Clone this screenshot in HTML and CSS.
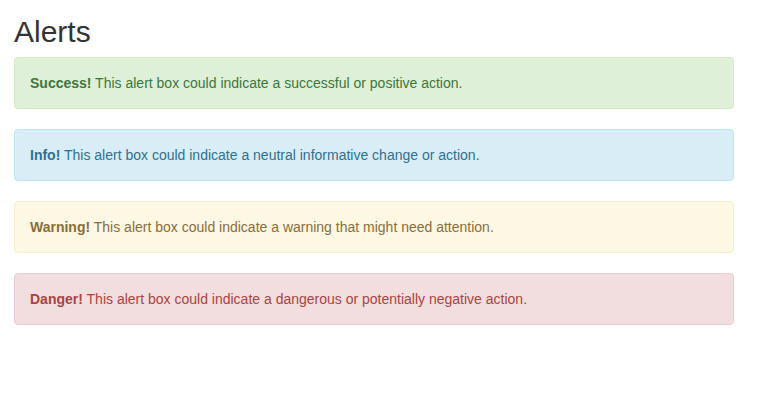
FILE: index.html
```html
<!DOCTYPE html>
<html>
<head>
<meta charset="utf-8">
<link rel="stylesheet" href="styles.css">
</head>
<body>
<div class="container">
  <h2 class="title">Alerts</h2>
  <div class="alert alert-success"><strong>Success!</strong> This alert box could indicate a successful or positive action.</div>
  <div class="alert alert-info"><strong>Info!</strong> This alert box could indicate a neutral informative change or action.</div>
  <div class="alert alert-warning"><strong>Warning!</strong> This alert box could indicate a warning that might need attention.</div>
  <div class="alert alert-danger"><strong>Danger!</strong> This alert box could indicate a dangerous or potentially negative action.</div>
</div>
</body>
</html>
```
FILE: styles.css
```css
html, body {
  margin: 0;
  padding: 0;
  background: #fff;
}
body {
  font-family: "Liberation Sans", Arial, sans-serif;
  font-size: 14px;
  line-height: 20px;
  color: #333;
}
.container {
  width: 720px;
  padding: 0 14px;
}
.title {
  font-size: 30px;
  font-weight: 500;
  line-height: 33px;
  margin: 15px 0 9px;
  color: #333;
}
.alert {
  padding: 15px;
  margin-bottom: 20px;
  border: 1px solid transparent;
  border-radius: 4px;
}
.alert strong {
  font-weight: 700;
}
.alert-success {
  color: #3c763d;
  background: #dff0d8;
  border-color: #d6e9c6;
}
.alert-info {
  color: #31708f;
  background: #d9edf7;
  border-color: #bce8f1;
}
.alert-warning {
  color: #8a6d3b;
  background: #fcf8e3;
  border-color: #faebcc;
}
.alert-danger {
  color: #a94442;
  background: #f2dede;
  border-color: #ebccd1;
}
```
